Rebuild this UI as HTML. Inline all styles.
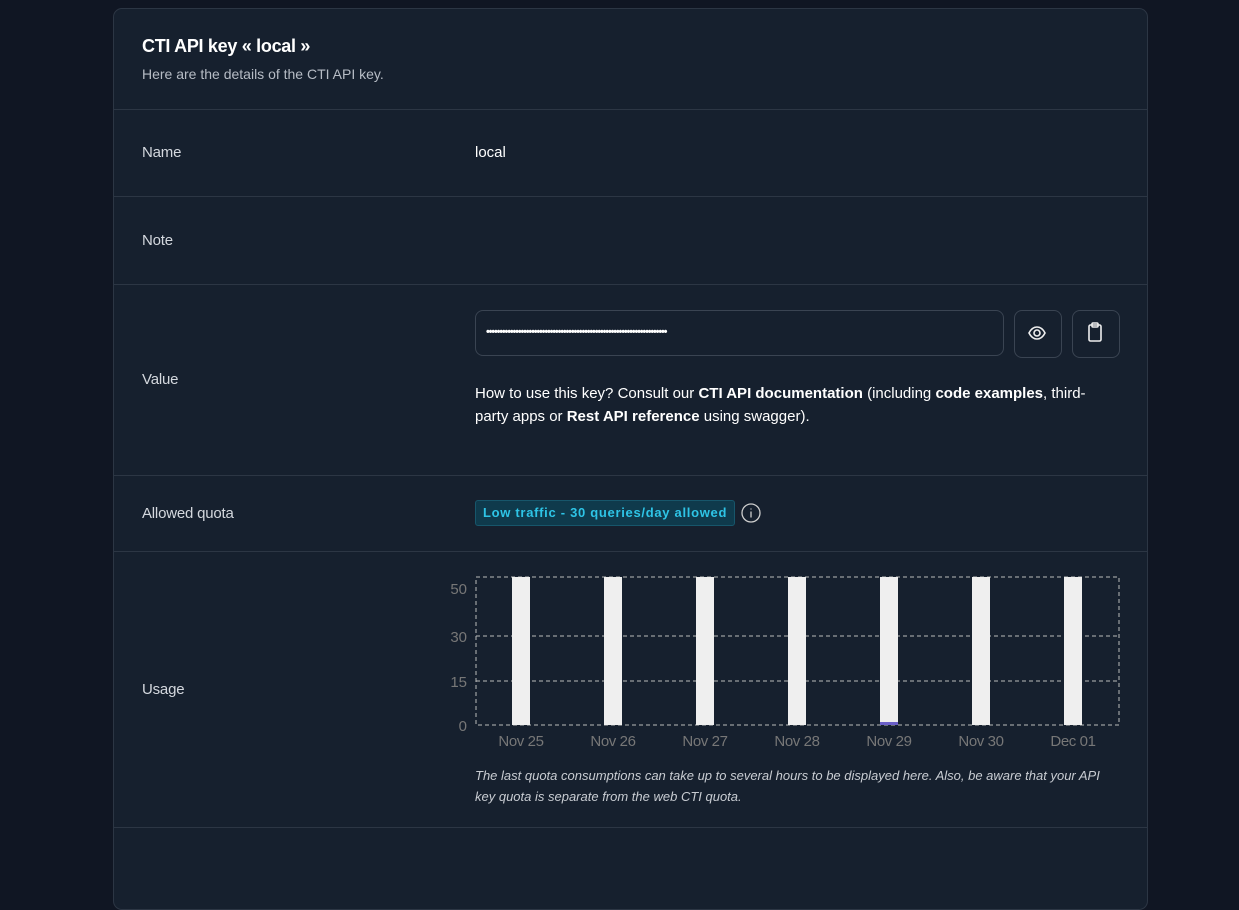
<!DOCTYPE html><html><head><style>
body{margin:0;background:#101623;font-family:"Liberation Sans",sans-serif;color:#e6e8eb;width:1239px;height:851px;overflow:hidden;position:relative}
.card{position:absolute;left:113px;top:8px;width:1033px;height:900px;background:#16202e;border:1px solid #2c3644;border-radius:9px}
.hr{position:absolute;left:0;right:0;height:1px;background:#2c3644}
.t{position:absolute;white-space:nowrap}
.lab{left:28px;font-size:15px;color:#d4d8de;letter-spacing:-0.2px}
</style></head><body>
<div class="card">
<div class="t" style="left:28px;top:27px;font-size:18px;font-weight:bold;color:#fff;letter-spacing:-0.3px">CTI API key « local »</div>
<div class="t" style="left:28px;top:57px;font-size:14px;color:#b6bcc5">Here are the details of the CTI API key.</div>
<div class="hr" style="top:100px"></div>
<div class="t lab" style="top:135px">Name</div>
<div class="t" style="left:361px;top:135px;font-size:15px;color:#fff">local</div>
<div class="hr" style="top:187px"></div>
<div class="t lab" style="top:223px">Note</div>
<div class="hr" style="top:275px"></div>
<div class="t lab" style="top:362px">Value</div>
<div style="position:absolute;left:361px;top:301px;width:527px;height:44px;border:1px solid #3a4452;border-radius:8px"></div>
<div class="t" style="left:372px;top:317px;font-size:11px;font-weight:bold;color:#fff;letter-spacing:-1.2px">••••••••••••••••••••••••••••••••••••••••••••••••••••••••••••••••••••</div>
<div style="position:absolute;left:900px;top:301px;width:46px;height:46px;border:1px solid #3a4452;border-radius:8px"></div>
<svg style="position:absolute;left:913px;top:314px" width="20" height="20" viewBox="0 0 20 20" fill="none" stroke="#eee" stroke-width="1.6"><path d="M2 10c2-4 5-6 8-6s6 2 8 6c-2 4-5 6-8 6s-6-2-8-6z"/><circle cx="10" cy="10" r="3"/></svg>
<div style="position:absolute;left:958px;top:301px;width:46px;height:46px;border:1px solid #3a4452;border-radius:8px"></div>
<svg style="position:absolute;left:971px;top:312px" width="20" height="22" viewBox="0 0 20 22" fill="none" stroke="#eee" stroke-width="1.6"><rect x="4" y="4" width="12" height="16" rx="1.5"/><rect x="7" y="2" width="6" height="4" rx="1"/></svg>
<div style="position:absolute;left:361px;top:373px;width:628px;font-size:15px;line-height:23px;color:#fff">How to use this key? Consult our <b>CTI API documentation</b> (including <b>code examples</b>, third-party apps or <b>Rest API reference</b> using swagger).</div>
<div class="hr" style="top:466px"></div>
<div class="t lab" style="top:496px">Allowed quota</div>
<div class="t" style="left:361px;top:491px;height:24px;line-height:24px;padding:0 7px;font-size:13px;font-weight:bold;color:#2ec4e6;background:#0f3a4c;border:1px solid #17566b;border-radius:3px;letter-spacing:0.7px">Low traffic - 30 queries/day allowed</div>
<svg style="position:absolute;left:627px;top:494px" width="20" height="20" viewBox="0 0 20 20" fill="none" stroke="#ccc" stroke-width="1.3"><circle cx="10" cy="10" r="9"/><path d="M10 8.5v6M10 5.5v1"/></svg>
<div class="hr" style="top:542px"></div>
<div class="t lab" style="top:672px">Usage</div>
<svg style="position:absolute;left:300px;top:560px" width="720" height="200" viewBox="300 560 720 200" font-family="Liberation Sans" font-size="15" fill="#777">
<g stroke="#bbb" stroke-dasharray="4 3" fill="none"><path d="M362 568H1005V716H362Z"/><path d="M362 627H1005M362 672H1005"/></g>
<g fill="#efefef"><rect x="398" y="568" width="18" height="148"/><rect x="490" y="568" width="18" height="148"/><rect x="582" y="568" width="18" height="148"/><rect x="674" y="568" width="18" height="148"/><rect x="766" y="568" width="18" height="148"/><rect x="858" y="568" width="18" height="148"/><rect x="950" y="568" width="18" height="148"/></g>
<rect x="766" y="713" width="18" height="3" fill="#6a5fc8"/>
<g text-anchor="end"><text x="353" y="585">50</text><text x="353" y="633">30</text><text x="353" y="678">15</text><text x="353" y="722">0</text></g>
<g text-anchor="middle" letter-spacing="-0.4"><text x="407" y="737">Nov 25</text><text x="499" y="737">Nov 26</text><text x="591" y="737">Nov 27</text><text x="683" y="737">Nov 28</text><text x="775" y="737">Nov 29</text><text x="867" y="737">Nov 30</text><text x="959" y="737">Dec 01</text></g>
</svg>
<div style="position:absolute;left:361px;top:756px;width:635px;font-size:13px;line-height:21px;font-style:italic;color:#c8ccd2">The last quota consumptions can take up to several hours to be displayed here. Also, be aware that your API key quota is separate from the web CTI quota.</div>
<div class="hr" style="top:818px"></div>
</div>
</body></html>
